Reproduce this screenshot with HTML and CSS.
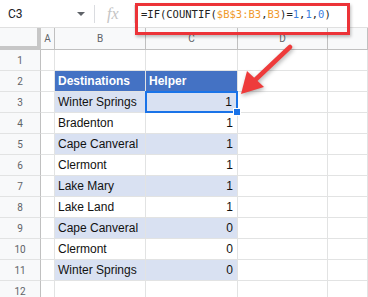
FILE: index.html
```html
<!DOCTYPE html>
<html lang="en">
<head>
    <meta charset="UTF-8">
    <title>Sheet</title>
    <link rel="stylesheet" href="styles.css">
</head>
<body>
<div class="page">
    <!-- formula bar -->
    <div class="formula-bar">
        <div class="name-box">
            <span class="cell-ref">C3</span>
            <span class="drop"></span>
        </div>
        <div class="fx">fx</div>
        <div class="formula">=IF(COUNTIF(<span class="ref">$B$3:B3</span>,<span class="ref">B3</span>)=<span class="num">1</span>,<span class="num">1</span>,<span class="num">0</span>)</div>
    </div>

    <!-- grid -->
    <div class="sheet">
        <div class="corner"></div>
        <div class="col-head">A</div>
        <div class="col-head">B</div>
        <div class="col-head">C</div>
        <div class="col-head">D</div>
        <div class="col-head"></div>

        <div class="row-head">1</div><div class="cell"></div><div class="cell"></div><div class="cell"></div><div class="cell"></div><div class="cell"></div>
        <div class="row-head">2</div><div class="cell"></div><div class="cell th">Destinations</div><div class="cell th">Helper</div><div class="cell"></div><div class="cell"></div>
        <div class="row-head">3</div><div class="cell"></div><div class="cell band">Winter Springs</div><div class="cell band val selected">1<span class="handle"></span></div><div class="cell"></div><div class="cell"></div>
        <div class="row-head">4</div><div class="cell"></div><div class="cell">Bradenton</div><div class="cell val">1</div><div class="cell"></div><div class="cell"></div>
        <div class="row-head">5</div><div class="cell"></div><div class="cell band">Cape Canveral</div><div class="cell band val">1</div><div class="cell"></div><div class="cell"></div>
        <div class="row-head">6</div><div class="cell"></div><div class="cell">Clermont</div><div class="cell val">1</div><div class="cell"></div><div class="cell"></div>
        <div class="row-head">7</div><div class="cell"></div><div class="cell band">Lake Mary</div><div class="cell band val">1</div><div class="cell"></div><div class="cell"></div>
        <div class="row-head">8</div><div class="cell"></div><div class="cell">Lake Land</div><div class="cell val">1</div><div class="cell"></div><div class="cell"></div>
        <div class="row-head">9</div><div class="cell"></div><div class="cell band">Cape Canveral</div><div class="cell band val">0</div><div class="cell"></div><div class="cell"></div>
        <div class="row-head">10</div><div class="cell"></div><div class="cell">Clermont</div><div class="cell val">0</div><div class="cell"></div><div class="cell"></div>
        <div class="row-head">11</div><div class="cell"></div><div class="cell band">Winter Springs</div><div class="cell band val">0</div><div class="cell"></div><div class="cell"></div>
        <div class="row-head">12</div><div class="cell"></div><div class="cell"></div><div class="cell"></div><div class="cell"></div><div class="cell"></div>
    </div>

    <!-- annotations -->
    <div class="callout"></div>
    <svg class="arrow" width="368" height="297" viewBox="0 0 368 297">
        <line x1="290" y1="47" x2="253" y2="82" stroke="#ee3b3b" stroke-width="4.5" stroke-linecap="round"/>
        <polygon points="241,94 247,71 264,87" fill="#ee3b3b"/>
    </svg>
</div>
</body>
</html>
```

FILE: styles.css
```css
body {
    margin: 0;
    background: #fff;
}

.page {
    position: relative;
    width: 368px;
    height: 297px;
    overflow: hidden;
}

/* formula bar */
.formula-bar {
    display: flex;
    align-items: center;
    height: 28px;
    border-bottom: 1px solid #e0e0e0;
    box-sizing: border-box;
    font-family: Roboto, "Liberation Sans", sans-serif;
}

.name-box {
    display: flex;
    align-items: center;
    width: 95px;
    height: 18px;
    padding-left: 8px;
    box-sizing: border-box;
    border-right: 1px solid #dadce0;
}

.cell-ref {
    flex: 1;
    font-size: 12px;
    color: #202124;
}

.drop {
    width: 0;
    height: 0;
    margin-right: 9px;
    border-left: 4px solid transparent;
    border-right: 4px solid transparent;
    border-top: 4px solid #5f6368;
}

.fx {
    width: 40px;
    height: 18px;
    padding-left: 12px;
    box-sizing: border-box;
    border-right: 1px solid #e8e8e8;
    font-family: "Liberation Serif", serif;
    font-style: italic;
    font-size: 16px;
    line-height: 17px;
    color: #c4c4c4;
}

.formula {
    padding-left: 6px;
    font-family: "DejaVu Sans Mono", monospace;
    font-size: 10.5px;
    color: #222;
    white-space: nowrap;
}

.formula .ref {
    color: #f0992b;
}

.formula .num {
    color: #3d7fe0;
}

/* sheet grid */
.sheet {
    display: grid;
    grid-template-columns: 41px 14px 91px 92px 90px 40px;
    grid-template-rows: 22px repeat(12, 21px);
    font-family: "Liberation Sans", Arial, sans-serif;
}

.sheet > div {
    box-sizing: border-box;
    border-right: 1px solid #e2e3e3;
    border-bottom: 1px solid #e2e3e3;
}

.corner {
    background: #f8f9fa;
    border-right: 4px solid #c7c7c7 !important;
    border-bottom: 4px solid #c7c7c7 !important;
}

.col-head {
    display: flex;
    align-items: center;
    justify-content: center;
    background: #f8f9fa;
    border-right-color: #c0c0c0 !important;
    border-bottom-color: #c0c0c0 !important;
    font-family: Roboto, "Liberation Sans", sans-serif;
    font-size: 10px;
    color: #5f6368;
}

.row-head {
    display: flex;
    align-items: center;
    justify-content: center;
    background: #f8f9fa;
    border-right-color: #c0c0c0 !important;
    font-family: Roboto, "Liberation Sans", sans-serif;
    font-size: 10px;
    color: #5f6368;
}

.cell {
    display: flex;
    align-items: center;
    padding: 0 3px;
    font-size: 12px;
    color: #111;
    white-space: nowrap;
}

.cell.th {
    background: #4472c4;
    color: #fff;
    font-weight: bold;
}

.cell.band {
    background: #d9e1f2;
}

.cell.val {
    justify-content: flex-end;
    padding-right: 4px;
}

.cell.selected {
    position: relative;
    border: 2px solid #1a73e8 !important;
    margin: -1px 0 0 -1px;
    width: calc(100% + 1px);
    height: calc(100% + 1px);
}

.handle {
    position: absolute;
    right: -5px;
    bottom: -5px;
    width: 6px;
    height: 6px;
    background: #1a73e8;
    border: 1px solid #fff;
}

/* annotations */
.callout {
    position: absolute;
    left: 135px;
    top: 3px;
    width: 215px;
    height: 32px;
    box-sizing: border-box;
    border: 3px solid #ec3338;
    box-shadow: 1px 2px 3px rgba(0, 0, 0, 0.25);
}

.arrow {
    position: absolute;
    left: 0;
    top: 0;
    filter: drop-shadow(1px 2px 2px rgba(0, 0, 0, 0.3));
}
```
